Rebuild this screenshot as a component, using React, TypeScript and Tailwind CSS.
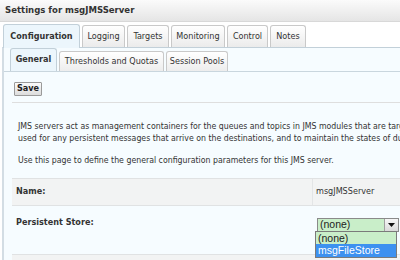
export default function App() {
  const topTabs = [
    { label: "Configuration", w: "w-[77px]", active: true },
    { label: "Logging", w: "w-[43px]" },
    { label: "Targets", w: "w-[42px]" },
    { label: "Monitoring", w: "w-[54px]" },
    { label: "Control", w: "w-[41px]" },
    { label: "Notes", w: "w-[36px]" },
  ];
  const subTabs = [
    { label: "General", w: "w-[47px]", active: true },
    { label: "Thresholds and Quotas", w: "w-[105px]" },
    { label: "Session Pools", w: "w-[62px]" },
  ];

  return (
    <div className="relative w-[400px] h-[260px] overflow-hidden bg-white text-[#333] text-[9px] font-['DejaVu_Sans_Condensed','DejaVu_Sans',sans-serif]">
      {/* title bar */}
      <div className="h-[22px] flex items-center px-[5px] font-bold text-[9.5px] bg-linear-to-b from-[#fbfbfb] to-[#e5e5e5] border-b border-[#d8d8d8]">
        Settings for msgJMSServer
      </div>

      {/* top tabs */}
      <div className="flex items-end gap-[2px] pl-[3px] h-[25px]">
        {topTabs.map((t) =>
          t.active ? (
            <div
              key={t.label}
              className={`${t.w} h-[24px] -mb-px relative z-10 flex items-center justify-center font-bold bg-[#ecf6fc] border border-b-0 border-[#c2d0d9] rounded-t-[3px]`}
            >
              {t.label}
            </div>
          ) : (
            <div
              key={t.label}
              className={`${t.w} h-[22px] flex items-center justify-center bg-linear-to-b from-white to-[#ebebeb] border border-b-0 border-[#c9c9c9] rounded-t-[3px]`}
            >
              {t.label}
            </div>
          )
        )}
      </div>

      {/* panel */}
      <div className="ml-[2px] h-[213px] overflow-hidden border-l-2 border-l-[#d3dde4] border-t border-t-[#c2d0d9] bg-[#f6fcff]">
        {/* sub tabs */}
        <div className="flex items-end gap-[2px] pl-[6px] h-[24px] border-b border-[#c9d6de]">
          {subTabs.map((t) =>
            t.active ? (
              <div
                key={t.label}
                className={`${t.w} h-[23px] flex items-center justify-center font-bold bg-[#ecf6fc] border border-b-0 border-[#c2d0d9] rounded-t-[3px]`}
              >
                {t.label}
              </div>
            ) : (
              <div
                key={t.label}
                className={`${t.w} h-[20px] flex items-center justify-center bg-linear-to-b from-white to-[#ededed] border border-b-0 border-[#c9c9c9] rounded-t-[3px]`}
              >
                {t.label}
              </div>
            )
          )}
        </div>

        {/* save */}
        <div className="pl-[8px] pt-[10px]">
          <div className="ml-[2px] w-[28px] h-[14px] flex items-center justify-center font-bold text-[#222] border border-[#9a9a9a] rounded-[1px] bg-linear-to-b from-[#fbfbfb] to-[#dcdcdc]">
            Save
          </div>
          <div className="mt-[6px] border-t border-[#dedede]" />
        </div>

        {/* description */}
        <div className="pl-[14px] pt-[17px] leading-[12px] whitespace-nowrap text-[8.7px]">
          <div>JMS servers act as management containers for the queues and topics in JMS modules that are targ</div>
          <div>used for any persistent messages that arrive on the destinations, and to maintain the states of du</div>
          <div className="mt-[10px]">Use this page to define the general configuration parameters for this JMS server.</div>
        </div>

        {/* fields */}
        <div className="ml-[8px] mt-[12px]">
          <div className="h-[28px] flex items-center bg-[#f2f3f3] border-t border-b border-[#e0e2e3]">
            <div className="w-[301px] h-full flex items-center pl-[4px] font-bold border-r border-[#e3e5e6]">Name:</div>
            <div className="pl-[3px]">msgJMSServer</div>
          </div>
          <div className="h-[48px] flex items-start">
            <div className="w-[302px] pl-[4px] pt-[10px] font-bold">Persistent Store:</div>
            <div className="pt-[12px] pl-[3px]">
              <div className="w-[82px] h-[14px] flex border border-[#8a8a8a] bg-[#c9eec9] font-['Liberation_Sans',Arial,sans-serif] text-[10.5px] text-[#222]">
                <div className="flex-1 flex items-center pl-[2px]">(none)</div>
                <div className="w-[14px] flex items-center justify-center bg-linear-to-b from-[#f6f6f6] to-[#dadada] border-l border-[#a0a0a0]">
                  <svg width="7" height="4" viewBox="0 0 7 4">
                    <path d="M0 0h7L3.5 4z" fill="#111" />
                  </svg>
                </div>
              </div>
            </div>
          </div>
          <div className="h-[10px] bg-[#f2f3f3] border-t border-[#e0e2e3]" />
        </div>
      </div>

      {/* open dropdown list */}
      <div className="absolute left-[315px] top-[231px] w-[82px] border border-[#7a7a7a] font-['Liberation_Sans',Arial,sans-serif] text-[10.5px] leading-[12px]">
        <div className="h-[12px] pl-[2px] bg-[#c9eec9] text-[#222]">(none)</div>
        <div className="h-[13px] pl-[2px] bg-[#3d91f0] text-white">msgFileStore</div>
      </div>
    </div>
  );
}
